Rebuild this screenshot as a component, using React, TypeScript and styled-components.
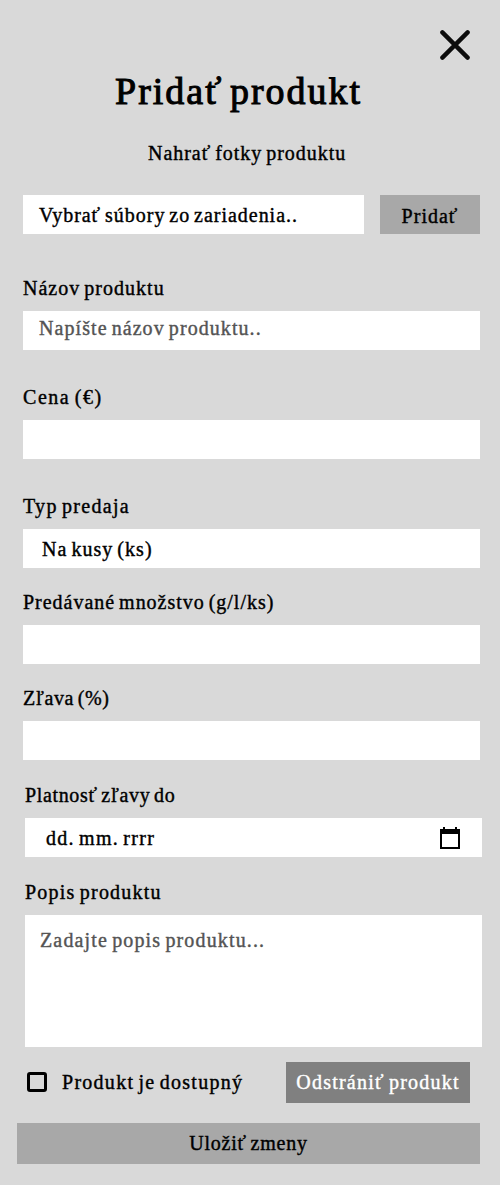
import React from "react";
import styled, { createGlobalStyle } from "styled-components";

const GlobalStyle = createGlobalStyle`
  *, *::before, *::after { box-sizing: border-box; }
  body { margin: 0; background: #d9d9d9; }
`;

const Page = styled.main`
  display: flex;
  flex-direction: column;
  width: 500px;
  height: 1185px;
  padding: 28px 18px 0 23px;
  background: #d9d9d9;
  color: #000;
  font-family: "Liberation Serif", "Times New Roman", serif;
  font-size: 20px;
  line-height: 24px;
`;

const Text = styled.span<{ $track: number }>`
  display: block;
  white-space: nowrap;
  letter-spacing: ${(p) => p.$track}px;
  word-spacing: -2px;
  -webkit-text-stroke: 0.4px currentColor;
`;

const TitleText = styled(Text)`
  word-spacing: -5px;
  -webkit-text-stroke-width: 1px;
`;

const CloseButton = styled.button`
  align-self: flex-end;
  display: block;
  width: 34px;
  height: 34px;
  margin-right: 8px;
  padding: 0;
  border: 0;
  background: none;
  svg { display: block; }
`;

const Title = styled.h1`
  margin: 7px 0 0 92px;
  font-size: 38px;
  font-weight: 400;
  line-height: 44px;
`;

const Subtitle = styled.div`
  height: 24px;
  margin: 28px 0 0 125px;
`;

const UploadRow = styled.div`
  display: flex;
  gap: 16px;
  margin-top: 30px;
`;

const Box = styled.div<{ $top?: number; $left?: number; $height?: number; $muted?: boolean }>`
  display: flex;
  justify-content: space-between;
  align-items: flex-start;
  width: 457px;
  height: ${(p) => p.$height ?? 39}px;
  padding: ${(p) => p.$top ?? 8}px 21px 0 ${(p) => p.$left ?? 16}px;
  background: #fff;
  color: ${(p) => (p.$muted ? "#545454" : "#000")};
`;

const FileBox = styled(Box)`
  width: 341px;
`;

const Button = styled.button<{ $width: number; $height: number; $top?: number; $danger?: boolean }>`
  display: flex;
  justify-content: center;
  align-items: flex-start;
  flex: none;
  width: ${(p) => p.$width}px;
  height: ${(p) => p.$height}px;
  padding: ${(p) => p.$top ?? 8}px 0 0;
  border: 0;
  background: ${(p) => (p.$danger ? "#808080" : "#a8a8a8")};
  color: ${(p) => (p.$danger ? "#fff" : "#000")};
  font: inherit;
`;

const Field = styled.section<{ $gap: number; $shift?: boolean }>`
  display: flex;
  flex-direction: column;
  gap: 11px;
  margin-top: ${(p) => p.$gap}px;
  margin-left: ${(p) => (p.$shift ? 2 : 0)}px;
`;

const CalendarIcon = styled.svg`
  display: block;
  flex: none;
`;

const ActionRow = styled.div`
  display: flex;
  align-items: flex-start;
  justify-content: space-between;
  margin: 15px 12px 0 4px;
`;

const CheckLabel = styled.label`
  display: flex;
  gap: 15px;
  padding-top: 8px;
`;

const Checkbox = styled.span`
  width: 20px;
  height: 20px;
  margin-top: 2px;
  border: 3px solid #000;
  border-radius: 3px;
`;

const SaveRow = styled.div`
  margin: 20px 0 0 -6px;
`;

export default function App() {
  return (
    <>
      <GlobalStyle />
      <Page>
        <CloseButton aria-label="Zavrieť">
          <svg width="34" height="34" viewBox="0 0 34 34" fill="none" stroke="#0c0c0c" strokeWidth="4.4" strokeLinecap="round">
            <path d="M2.4 4.4 27.6 29.6M27.6 4.4 2.4 29.6" />
          </svg>
        </CloseButton>
        <Title><TitleText $track={2}>Pridať produkt</TitleText></Title>
        <Subtitle><Text $track={0.97}>Nahrať fotky produktu</Text></Subtitle>
        <UploadRow>
          <FileBox><Text $track={0.97}>Vybrať súbory zo zariadenia..</Text></FileBox>
          <Button $width={100} $height={39} $top={9}><Text $track={1}>Pridať</Text></Button>
        </UploadRow>
        <Field $gap={42}>
          <Text $track={1.02}>Názov produktu</Text>
          <Box $top={5} $muted><Text $track={1.07}>Napíšte názov produktu..</Text></Box>
        </Field>
        <Field $gap={35}>
          <Text $track={1.55}>Cena (€)</Text>
          <Box />
        </Field>
        <Field $gap={35}>
          <Text $track={1.3}>Typ predaja</Text>
          <Box $left={19}><Text $track={1.03}>Na kusy (ks)</Text></Box>
        </Field>
        <Field $gap={22}>
          <Text $track={0.98}>Predávané množstvo (g/l/ks)</Text>
          <Box />
        </Field>
        <Field $gap={22}>
          <Text $track={0.6}>Zľava (%)</Text>
          <Box />
        </Field>
        <Field $gap={23} $shift>
          <Text $track={0.65}>Platnosť zľavy do</Text>
          <Box $left={21}>
            <Text $track={1.28}>dd. mm. rrrr</Text>
            <CalendarIcon width="21" height="24" viewBox="0 0 21 24">
              <path fillRule="evenodd" d="M3 1h2v2h10V1h2v2h3v20H0V3h3ZM2 8v13h16V8Z" />
            </CalendarIcon>
          </Box>
        </Field>
        <Field $gap={23} $shift>
          <Text $track={1.22}>Popis produktu</Text>
          <Box $height={132} $top={13} $left={15} $muted><Text $track={1.15}>Zadajte popis produktu...</Text></Box>
        </Field>
        <ActionRow>
          <CheckLabel>
            <Checkbox role="checkbox" aria-checked="false" />
            <Text $track={1.27}>Produkt je dostupný</Text>
          </CheckLabel>
          <Button $width={184} $height={41} $danger><Text $track={1.22}>Odstrániť produkt</Text></Button>
        </ActionRow>
        <SaveRow>
          <Button $width={463} $height={41}><Text $track={0.75}>Uložiť zmeny</Text></Button>
        </SaveRow>
      </Page>
    </>
  );
}
